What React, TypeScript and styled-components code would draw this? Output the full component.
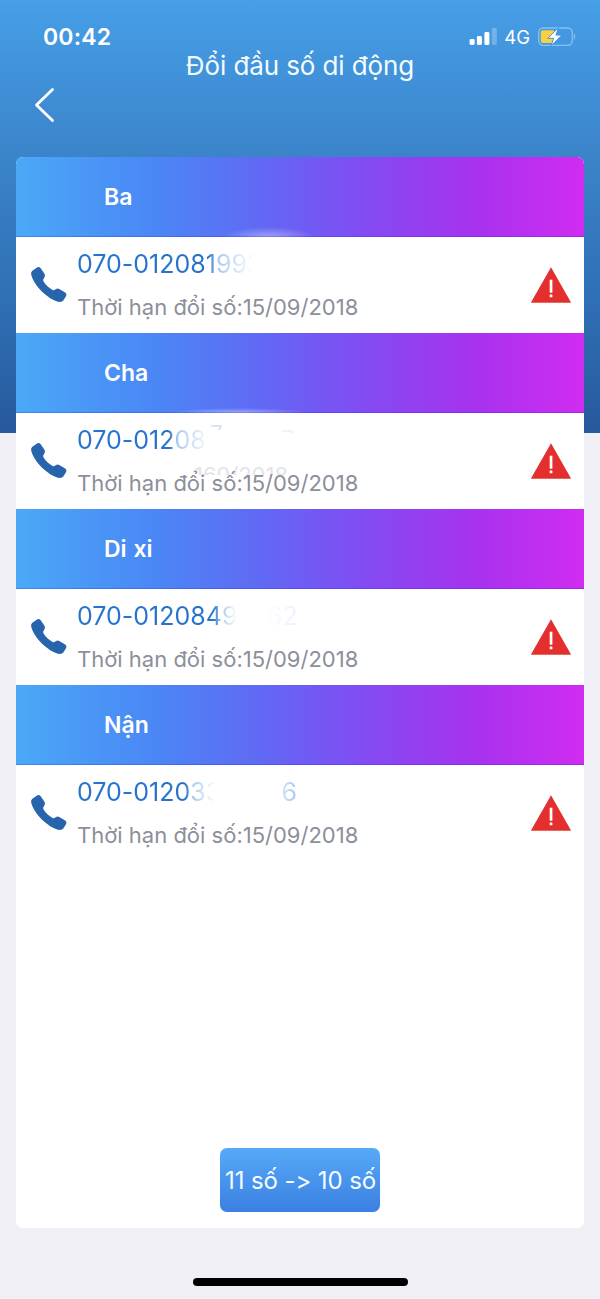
import React from "react";
import styled, { createGlobalStyle, css } from "styled-components";

const GlobalStyle = createGlobalStyle`
  *, *::before, *::after { box-sizing: border-box; }
  body {
    margin: 0;
    background: #f0eff5;
    font-family: Inter, "Noto Sans", sans-serif;
    font-feature-settings: "calt" 0;
  }
`;

const Screen = styled.main`
  display: flex;
  flex-direction: column;
  width: 600px;
  height: 1299px;
  overflow: hidden;
  background: linear-gradient(#469fe7 0, #3b84ca 155px, #2f6fb5 300px, #27599c 433px) top / 100% 433px no-repeat #f0eff5;
`;

const StatusBar = styled.div`
  display: flex;
  justify-content: space-between;
  align-items: center;
  height: 50px;
  padding: 24px 23px 0 43px;
  color: #fff;
`;

const Clock = styled.span`
  font-size: 23px;
  line-height: 26px;
  font-weight: 600;
  letter-spacing: 0.2px;
`;

const StatusIcons = styled.div`
  display: flex;
  align-items: center;
`;

const Network = styled.span`
  margin: 0 7px 0 7px;
  font-size: 18.5px;
  line-height: 26px;
  letter-spacing: 0;
`;

const Title = styled.h1`
  margin: 0;
  height: 33px;
  text-align: center;
  font-size: 26px;
  line-height: 32px;
  font-weight: 400;
  letter-spacing: -0.1px;
  color: #f4fbff;
`;

const BackButton = styled.button`
  display: flex;
  align-items: center;
  justify-content: center;
  width: 40px;
  height: 44px;
  margin: 0 0 30px 24px;
  padding: 0;
  border: 0;
  background: none;
`;

const Card = styled.section`
  display: flex;
  flex-direction: column;
  height: 1071px;
  margin: 0 16px;
  border-radius: 7px;
  overflow: hidden;
  background: #fff;
`;

const GroupHeader = styled.h2<{ $glow?: string }>`
  display: flex;
  align-items: center;
  height: 80px;
  margin: 0;
  padding: 0 0 0 88px;
  background: ${(p) => (p.$glow ? p.$glow + ", " : "")}
    linear-gradient(90deg, #4ba9f7 0%, #4a87f5 24%, #5f6bf4 42%, #7358f3 53%, #8b45f2 66%, #a832ef 81%, #d02cf0 100%);
  box-shadow: inset 0 -1px rgba(40, 50, 200, 0.3);
  color: #fff;
  font-size: 23px;
  font-weight: 600;
  letter-spacing: 0;
  word-spacing: 1px;
`;

const ContactRow = styled.div`
  display: flex;
  align-items: center;
  height: 96px;
  padding: 0 12px 0 14px;
`;

const PhoneSlot = styled.div`
  display: flex;
  width: 47px;
`;

const Details = styled.div`
  position: relative;
  flex: 1;
  height: 96px;
  padding-top: 10px;
  white-space: nowrap;
`;

const PhoneNumber = styled.div`
  display: flex;
  height: 34px;
  font-size: 25px;
  line-height: 34px;
`;

const fadingInk = css<{ $from: number; $to: number }>`
  background: linear-gradient(90deg, #2672cd ${(p) => p.$from}px, #a9c8ee ${(p) => p.$from + 8}px, #fff ${(p) => p.$to}px);
  background-clip: text;
  -webkit-background-clip: text;
  color: transparent;
`;

const Digits = styled.span<{ $from: number; $to: number }>`
  ${fadingInk}
  width: 190px;
  flex: none;
  letter-spacing: 0;
`;

const LastDigits = styled.span<{ $tone: string }>`
  width: 30px;
  text-align: right;
  background: linear-gradient(90deg, #fff 0, ${(p) => p.$tone} 30px);
  background-clip: text;
  -webkit-background-clip: text;
  color: transparent;
`;

const Deadline = styled.div`
  position: relative;
  margin-top: 9px;
  height: 34px;
  font-size: 22px;
  line-height: 34px;
  letter-spacing: 0;
  color: #8b8f9a;
`;

const Ghost = styled.span<{ $x: number; $y: number; $height: number; $tone: string }>`
  position: absolute;
  left: ${(p) => p.$x}px;
  top: ${(p) => p.$y}px;
  height: ${(p) => p.$height}px;
  overflow: hidden;
  font-size: 22px;
  line-height: 22px;
  color: ${(p) => p.$tone};
`;

const ConvertButton = styled.button`
  width: 160px;
  height: 64px;
  margin: auto auto 16px;
  padding: 1px 0 0 1px;
  border: 0;
  border-radius: 7px;
  background: linear-gradient(#57a9f7, #3a80e2);
  color: #f6fcff;
  font-family: inherit;
  font-feature-settings: inherit;
  font-size: 24px;
  letter-spacing: -0.1px;
  white-space: nowrap;
`;

const HomeIndicator = styled.div`
  width: 215px;
  height: 8px;
  margin: 50px auto 0;
  border-radius: 4px;
  background: #000;
`;

const SignalIcon = () => (
  <svg width="28" height="18" viewBox="0 0 28 18" fill="#fff">
    <rect x="0.6" y="11" width="5" height="6" rx="1.4" />
    <rect x="7.9" y="8" width="5" height="9" rx="1.4" />
    <rect x="15.4" y="4" width="5" height="13" rx="1.4" />
    <rect x="22.8" y="0" width="5" height="17" rx="1.4" opacity=".25" />
  </svg>
);

const BatteryIcon = () => (
  <svg width="40" height="20" viewBox="0 0 40 20">
    <rect x="1.7" y="1" width="33.6" height="17.3" rx="4.5" fill="none" stroke="#86c1f2" strokeWidth="1.3" />
    <path d="M36.8 6.5c1.9.8 1.9 5.5 0 6.3z" fill="#86c1f2" />
    <rect x="3.8" y="3.3" width="14" height="12.8" rx="2" fill="#f9cf45" />
    <path d="M21.4.7 10.8 11.3h5.8L14 18.9 24.8 8.1h-5.8z" fill="#fff" stroke="#4493dc" strokeWidth="1" />
  </svg>
);

const BackIcon = () => (
  <svg width="22" height="36" viewBox="0 0 22 36" fill="none" stroke="#fff" strokeWidth="2.8" strokeLinecap="round" strokeLinejoin="round">
    <path d="M19.5 2.5 3.5 18 19.5 33.5" />
  </svg>
);

const PhoneIcon = () => (
  <svg width="38" height="38" viewBox="0 0 38 38" fill="#2863ae">
    <path d="M2.1 5.1 6.9 1.6Q9 .2 10.5 1.9L14.3 7.4Q15.6 9.2 14.6 11L13.3 13.3Q12.9 14.6 13.7 15.8C16 19.2 18.6 21.6 22.2 23.8Q23.4 24.5 24.5 23.9L26 22.9Q27.5 22 29.2 22.9L35.2 26.5Q37.2 27.8 36.1 29.9L33.7 33.9Q32.4 36 29.9 36C24.8 35.6 19.5 32.2 14.4 27.8C8.3 22.4 2.9 15.7 1.2 8.8Q.7 6.3 2.1 5.1Z" />
  </svg>
);

const WarningIcon = () => (
  <svg width="42" height="37" viewBox="0 0 42 37">
    <path d="M21 .2 41.2 35.8H.8z" fill="#e3302e" />
    <rect x="19.7" y="12.7" width="2.7" height="13" fill="#fff" />
    <rect x="19.7" y="27.4" width="2.7" height="2.8" rx=".5" fill="#fff" />
  </svg>
);

type GhostMark = { text: string; x: number; y: number; height: number; tone: string };

type Contact = {
  name: string;
  digits: string;
  from: number;
  to: number;
  tail?: string;
  tone?: string;
  ghosts?: GhostMark[];
  glow?: string;
};

const contacts: Contact[] = [
  {
    name: "Ba", digits: "070-012081993", from: 132, to: 178,
    glow: "radial-gradient(ellipse 46px 10px at 253px 80px, rgba(255,255,255,.38), transparent)",
  },
  {
    name: "Cha", digits: "070-01208", from: 92, to: 134,
    ghosts: [
      { text: "7", x: 133, y: 9, height: 8, tone: "#d3e2f5" },
      { text: "7", x: 204, y: 14, height: 6, tone: "#edf3fb" },
      { text: "169/2018", x: 117, y: 51, height: 11, tone: "#e3e4e8" },
    ],
    glow: "radial-gradient(ellipse 70px 5px at 222px 80px, rgba(255,255,255,.45), transparent)",
  },
  { name: "Di xi", digits: "070-0120849", from: 136, to: 160, tail: "62", tone: "#eaf2fc" },
  { name: "Nận", digits: "070-012033", from: 108, to: 138, tail: "6", tone: "#a4c6ef" },
];

export default function App() {
  return (
    <>
      <GlobalStyle />
      <Screen>
        <StatusBar>
          <Clock>00:42</Clock>
          <StatusIcons>
            <SignalIcon />
            <Network>4G</Network>
            <BatteryIcon />
          </StatusIcons>
        </StatusBar>
        <Title>Đổi đầu số di động</Title>
        <BackButton aria-label="Back">
          <BackIcon />
        </BackButton>
        <Card>
          {contacts.map((c) => (
            <React.Fragment key={c.name}>
              <GroupHeader $glow={c.glow}>{c.name}</GroupHeader>
              <ContactRow>
                <PhoneSlot>
                  <PhoneIcon />
                </PhoneSlot>
                <Details>
                  <PhoneNumber>
                    <Digits $from={c.from} $to={c.to}>{c.digits}</Digits>
                    {c.tail && <LastDigits $tone={c.tone ?? "#fff"}>{c.tail}</LastDigits>}
                  </PhoneNumber>
                  {c.ghosts?.map((g) => (
                    <Ghost key={g.x} $x={g.x} $y={g.y} $height={g.height} $tone={g.tone}>{g.text}</Ghost>
                  ))}
                  <Deadline>Thời hạn đổi số:15/09/2018</Deadline>
                </Details>
                <WarningIcon />
              </ContactRow>
            </React.Fragment>
          ))}
          <ConvertButton>11 số -&gt; 10 số</ConvertButton>
        </Card>
        <HomeIndicator />
      </Screen>
    </>
  );
}
